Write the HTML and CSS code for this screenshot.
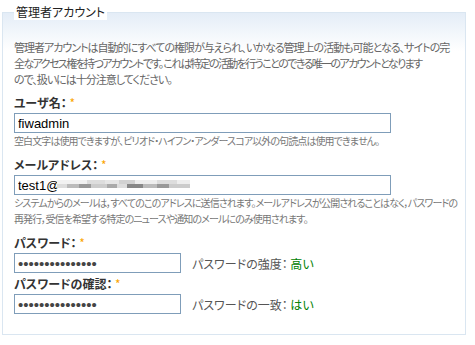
FILE: index.html
```html
<!DOCTYPE html>
<html lang="ja">
<head>
    <meta charset="UTF-8">
    <title>管理者アカウント</title>
    <link rel="stylesheet" href="styles.css">
</head>
<body>
    <fieldset class="account">
        <legend>管理者アカウント</legend>

        <p class="intro">
            管理者アカウントは自動的にすべての権限が与えられ、いかなる管理上の活動も可能となる、サイトの完<br>
            <span class="tight">全なアクセス権を持つアカウントです。 これは特定の活動を行うことのできる唯一のアカウントとなります</span><br>
            ので、扱いには十分注意してください。
        </p>

        <div class="item">
            <label for="name">ユーザ名： <span class="req">*</span></label>
            <input type="text" id="name" class="wide" value="fiwadmin">
            <div class="help">空白文字は使用できますが、ピリオド・ハイフン・アンダースコア以外の句読点は使用できません。</div>
        </div>

        <div class="item">
            <label for="mail">メールアドレス： <span class="req">*</span></label>
            <div class="masked">
                <input type="text" id="mail" class="wide" value="test1@">
                <span class="blur"></span>
            </div>
            <div class="help">システムからのメールは，すべてのこのアドレスに送信されます。メールアドレスが公開されることはなく，パスワードの<br>再発行，受信を希望する特定のニュースや通知のメールにのみ使用されます。</div>
        </div>

        <div class="item">
            <label for="pass1">パスワード： <span class="req">*</span></label>
            <div class="pass-row">
                <input type="password" id="pass1" class="short" value="aaaaaaaaaaaaaaa">
                <span class="check">パスワードの強度： <span class="ok">高い</span></span>
            </div>
        </div>

        <div class="item last">
            <label for="pass2">パスワードの確認： <span class="req">*</span></label>
            <div class="pass-row">
                <input type="password" id="pass2" class="short" value="aaaaaaaaaaaaaaa">
                <span class="check">パスワードの一致： <span class="ok">はい</span></span>
            </div>
        </div>
    </fieldset>
</body>
</html>
```

FILE: styles.css
```css
body {
    margin: 0;
    padding: 4px 0 0 2px;
    background: #fff;
    font-family: "Noto Sans CJK JP", sans-serif;
    font-feature-settings: "palt";
    color: #333;
}
.account {
    width: 440px;
    min-width: 0;
    margin: 0;
    padding: 0 11px 20px 11px;
    border: 1px solid #dae6f1;
    background: linear-gradient(#e4edf7, #fff 38px);
}
.account legend {
    padding: 0 2px;
    font-size: 12px;
    line-height: 16px;
    color: #222;
    background: #fff;
}
.intro {
    margin: 19px 0 0;
    font-size: 11px;
    line-height: 16px;
    letter-spacing: -1px;
    color: #666;
    white-space: nowrap;
}
.intro .tight {
    letter-spacing: -1.6px;
}
.item {
    margin-top: 8px;
}
.item.last {
    margin-top: 3px;
}
.item label {
    display: block;
    font-size: 12px;
    font-weight: bold;
    line-height: 16px;
    color: #333;
    margin-bottom: 2px;
}
.req {
    color: #fba500;
    font-weight: normal;
}
input.wide, input.short {
    display: block;
    box-sizing: border-box;
    height: 20px;
    margin: 0;
    padding: 0 3px;
    border: 1px solid #7f9db9;
    font-family: "Liberation Sans", Arial, sans-serif;
    font-size: 13px;
    color: #000;
    background: #fff;
}
input.wide {
    width: 377px;
}
input.short {
    width: 167px;
    font-size: 15px;
    color: #444;
}
.masked {
    position: relative;
}
.blur {
    position: absolute;
    left: 43px;
    top: 5px;
    width: 133px;
    height: 8px;
    background:
        linear-gradient(90deg, #ddd 0 10px, #bbb 10px 22px, #999 22px 34px, #ccc 34px 50px, #aaa 50px 60px, #ddd 60px 70px, #888 70px 86px, #bbb 86px 100px, #999 100px 112px, #ccc 112px 133px) 0 4px / 100% 4px no-repeat,
        linear-gradient(90deg, #f2f2f2 0 30px, #ddd 30px 48px, #e6e6e6 48px 62px, #d2d2d2 62px 78px, #eee 78px 100px, #ddd 100px 120px, #eee 120px 133px) 0 0 / 100% 4px no-repeat;
}
.help {
    font-size: 10px;
    line-height: 16px;
    letter-spacing: -0.9px;
    color: #777;
    white-space: nowrap;
}
.pass-row {
    display: flex;
    align-items: center;
    gap: 11px;
}
.check {
    font-size: 12px;
    color: #555;
}
.ok {
    color: #008000;
}
```
